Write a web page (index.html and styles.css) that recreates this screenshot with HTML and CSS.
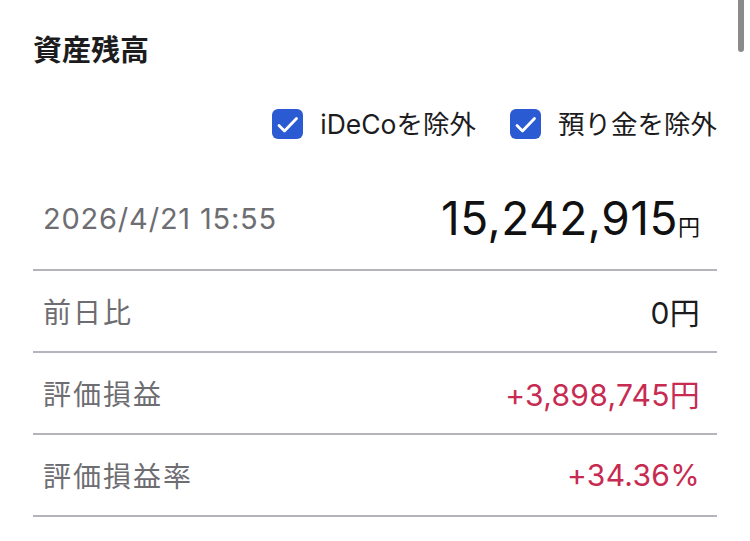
FILE: index.html
```html
<!DOCTYPE html>
<html lang="ja">
<head>
    <meta charset="UTF-8">
    <meta name="viewport" content="width=device-width, initial-scale=1.0">
    <link rel="stylesheet" href="styles.css">
</head>
<body>
    <div class="scroll-thumb"></div>

    <div class="panel">
        <h1 class="panel-title">資産残高</h1>

        <div class="filters">
            <label class="check">
                <span class="check-box">
                    <svg viewBox="0 0 31 30"><path d="M7 16.5l5.5 5.5 12-12.5"/></svg>
                </span>
                iDeCoを除外
            </label>
            <label class="check">
                <span class="check-box">
                    <svg viewBox="0 0 31 30"><path d="M7 16.5l5.5 5.5 12-12.5"/></svg>
                </span>
                預り金を除外
            </label>
        </div>

        <div class="row row-main">
            <span class="date">2026/4/21 15:55</span>
            <span class="total">15,242,915<small>円</small></span>
        </div>
        <div class="row">
            <span class="label">前日比</span>
            <span class="value">0円</span>
        </div>
        <div class="row">
            <span class="label">評価損益</span>
            <span class="value plus">+3,898,745円</span>
        </div>
        <div class="row">
            <span class="label">評価損益率</span>
            <span class="value plus">+34.36%</span>
        </div>
    </div>
</body>
</html>
```

FILE: styles.css
```css
body {
    margin: 0;
    background-color: #ffffff;
    font-family: 'Inter', 'Noto Sans CJK JP', sans-serif;
    color: #1c1c1e;
}

.scroll-thumb {
    position: absolute;
    top: 0;
    left: 738px;
    width: 6px;
    height: 52px;
    background-color: #8a8a8a;
    border-radius: 0 0 3px 3px;
}

.panel {
    padding: 0 33px;
}

.panel-title {
    margin: 0;
    padding-top: 32px;
    font-size: 29px;
    line-height: 38px;
    font-weight: 700;
}

.filters {
    display: flex;
    justify-content: flex-end;
    gap: 34px;
    margin-top: 38px;
}

.check {
    display: flex;
    align-items: center;
    gap: 17px;
    font-size: 26.5px;
    line-height: 32px;
    color: #1c1c1e;
}

.check-box {
    display: block;
    width: 31px;
    height: 30px;
    border-radius: 6px;
    background-color: #2b5bd3;
}

.check-box svg {
    display: block;
    width: 31px;
    height: 30px;
    fill: none;
    stroke: #ffffff;
    stroke-width: 2.8;
    stroke-linecap: round;
    stroke-linejoin: round;
}

.row {
    display: flex;
    align-items: center;
    justify-content: space-between;
    height: 80px;
    padding: 0 17px 0 10px;
    border-bottom: 2px solid #b4b4bd;
}

.row-main {
    height: 102px;
    margin-top: 27px;
}

.label {
    font-size: 28px;
    letter-spacing: 2px;
    color: #6d6d72;
}

.date {
    font-size: 29px;
    letter-spacing: 0.8px;
    color: #6d6d72;
}

.value {
    font-size: 30px;
    letter-spacing: 0.3px;
    color: #1c1c1e;
}

.total {
    font-size: 46px;
    letter-spacing: 0.5px;
    color: #111111;
}

.total small {
    font-size: 22px;
    letter-spacing: 0;
}

.plus {
    color: #c72b52;
}
```
